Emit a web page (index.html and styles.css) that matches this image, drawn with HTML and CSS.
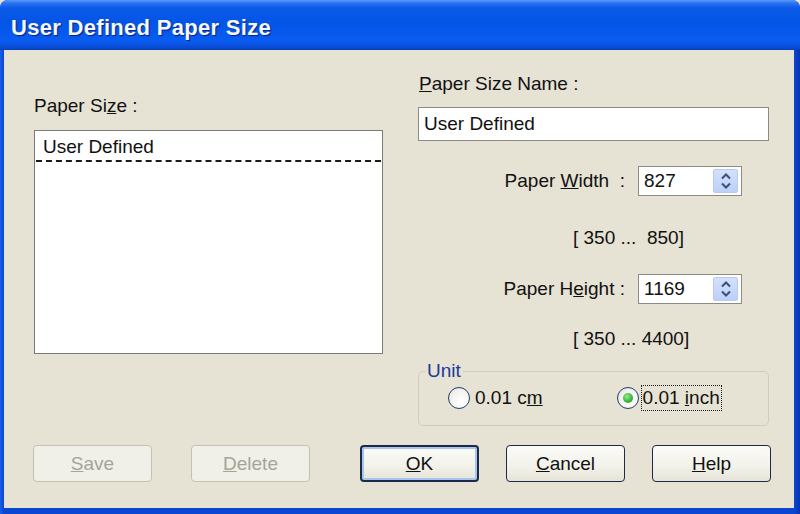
FILE: index.html
```html
<!DOCTYPE html>
<html>
<head>
<meta charset="utf-8">
<link rel="stylesheet" href="styles.css">
</head>
<body>
<div class="window">
  <div class="titlebar"><span class="title">User Defined Paper Size</span></div>
  <div class="client">
    <div class="top">
      <div class="left">
        <div class="label">Paper Si<u>z</u>e :</div>
        <div class="listbox"><div class="item">User Defined</div></div>
      </div>
      <div class="right">
        <div class="label name-label"><u>P</u>aper Size Name :</div>
        <div class="textbox">User Defined</div>
        <div class="field-row row-width">
          <span class="field-label">Paper <u>W</u>idth&nbsp; :</span>
          <div class="spin">
            <span class="spin-value">827</span>
            <span class="spin-btn"><svg width="14" height="20" viewBox="0 0 14 20"><path d="M3 7.5 L7 3.5 L11 7.5" fill="none" stroke="#3c4f7c" stroke-width="2"/><path d="M3 12.5 L7 16.5 L11 12.5" fill="none" stroke="#3c4f7c" stroke-width="2"/></svg></span>
          </div>
        </div>
        <div class="range range-width">[ 350 ...&nbsp;&nbsp;850]</div>
        <div class="field-row row-height">
          <span class="field-label">Paper H<u>e</u>ight :</span>
          <div class="spin">
            <span class="spin-value">1169</span>
            <span class="spin-btn"><svg width="14" height="20" viewBox="0 0 14 20"><path d="M3 7.5 L7 3.5 L11 7.5" fill="none" stroke="#3c4f7c" stroke-width="2"/><path d="M3 12.5 L7 16.5 L11 12.5" fill="none" stroke="#3c4f7c" stroke-width="2"/></svg></span>
          </div>
        </div>
        <div class="range range-height">[ 350 ... 4400]</div>
        <fieldset class="unit">
          <legend>Unit</legend>
          <div class="radios">
            <div class="radio radio-cm"><span class="circle"></span><span class="radio-text">0.01 c<u>m</u></span></div>
            <div class="radio radio-inch"><span class="circle checked"></span><span class="radio-text focus">0.01 <u>i</u>nch</span></div>
          </div>
        </fieldset>
      </div>
    </div>
    <div class="buttons">
      <div class="btn disabled"><u>S</u>ave</div>
      <div class="btn disabled btn-delete"><u>D</u>elete</div>
      <div class="btn default btn-ok"><u>O</u>K</div>
      <div class="btn btn-cancel"><u>C</u>ancel</div>
      <div class="btn btn-help"><u>H</u>elp</div>
    </div>
  </div>
</div>
</body>
</html>
```

FILE: styles.css
```css
html, body {
  margin: 0;
  padding: 0;
  background: #e6e2d4;
  overflow: hidden;
}

.window {
  width: 800px;
  height: 514px;
  display: flex;
  flex-direction: column;
  background: linear-gradient(to right, #1a5ee6 0, #0a46d2 4px, #0a46d2 794px, #0833b0 800px);
  border-radius: 8px 8px 0 0;
  overflow: hidden;
  font-family: "Liberation Sans", Arial, sans-serif;
  font-size: 19px;
  color: #111;
}

.titlebar {
  height: 50px;
  flex: none;
  display: flex;
  align-items: center;
  padding: 6px 0 0 11px;
  box-sizing: border-box;
  background: linear-gradient(to bottom, #5a9cfa 0, #2b74f2 3px, #0b5ae8 8px, #0355e6 45%, #0a5cf2 82%, #0a50dc 92%, #0740c0 100%);
}

.title {
  color: #f4f8ff;
  font-weight: bold;
  font-size: 22px;
  letter-spacing: 0.3px;
  text-shadow: 1px 1px 1px #0a1f80;
}

.client {
  flex: 1;
  margin: 0 6px 6px 4px;
  background: #e6e2d4;
  display: flex;
  flex-direction: column;
}

.top {
  display: flex;
  align-items: flex-start;
  padding-left: 30px;
}

.label {
  height: 22px;
  line-height: 22px;
  white-space: nowrap;
}

.left {
  width: 349px;
  margin-top: 45px;
}

.listbox {
  margin-top: 13px;
  height: 224px;
  box-sizing: border-box;
  border: 1px solid #7a7a78;
  background: #fff;
  padding: 1px;
}

.item {
  height: 28px;
  line-height: 30px;
  padding-left: 7px;
  border-bottom: 2px dashed #1a1a1a;
}

.right {
  width: 351px;
  margin-left: 35px;
  display: flex;
  flex-direction: column;
}

.name-label {
  margin-top: 23px;
  padding-left: 1px;
}

.textbox {
  margin-top: 12px;
  height: 34px;
  line-height: 32px;
  box-sizing: border-box;
  border: 1px solid #8b8b88;
  background: #fff;
  padding-left: 5px;
}

.field-row {
  display: flex;
  align-items: center;
  justify-content: flex-end;
  padding-right: 27px;
}

.row-width { margin-top: 25px; }
.row-height { margin-top: 25px; }

.field-label {
  margin-right: 13px;
  white-space: pre;
}

.spin {
  width: 104px;
  height: 30px;
  box-sizing: border-box;
  border: 1px solid #8b8b88;
  background: #fff;
  display: flex;
  align-items: center;
  justify-content: space-between;
  padding: 2px 3px 2px 5px;
}

.spin-value {
  line-height: 24px;
}

.spin-btn {
  width: 25px;
  height: 24px;
  box-sizing: border-box;
  border-radius: 2px;
  background: linear-gradient(to bottom, #d4e1fc, #bcd0f8);
  border: 1px solid #b7cbf2;
  display: flex;
  align-items: center;
  justify-content: center;
}

.range {
  height: 22px;
  line-height: 22px;
  padding-left: 155px;
  white-space: pre;
}

.range-width { margin-top: 31px; }
.range-height { margin-top: 24px; }

.unit {
  margin: 11px 0 0 0;
  padding: 0 0 12px 0;
  border: 1px solid #cfcbbd;
  border-radius: 5px;
  min-width: 0;
}

.unit legend {
  margin-left: 6px;
  padding: 0 2px;
  line-height: 20px;
  color: #1c3a9c;
}

.radios {
  display: flex;
  align-items: center;
  height: 30px;
  margin-top: 2px;
}

.radio {
  display: flex;
  align-items: center;
}

.radio-cm { margin-left: 29px; }
.radio-inch { margin-left: 74px; }

.circle {
  width: 22px;
  height: 22px;
  box-sizing: border-box;
  border-radius: 50%;
  border: 1.5px solid #1e3f6e;
  background: radial-gradient(circle at 65% 65%, #ffffff 0, #f4f3ee 55%, #dcdbd3 100%);
  display: flex;
  align-items: center;
  justify-content: center;
  margin-right: 5px;
}

.circle.checked::after {
  content: "";
  width: 10px;
  height: 10px;
  border-radius: 50%;
  background: radial-gradient(circle at 40% 35%, #8ef08e 0, #3db53d 55%, #1f8f1f 100%);
}

.radio-text {
  line-height: 24px;
}

.focus {
  outline: 1.5px dotted #1a1a1a;
  outline-offset: 0;
  padding: 0 1px;
  margin-left: -2px;
}

.buttons {
  display: flex;
  margin-top: 19px;
  padding-left: 29px;
}

.btn {
  width: 119px;
  height: 37px;
  box-sizing: border-box;
  border: 1px solid #1b2a48;
  border-radius: 4px;
  background: linear-gradient(to bottom, #fbfbf7 0, #f2f1ea 60%, #e6e4d8 100%);
  display: flex;
  align-items: center;
  justify-content: center;
  flex: none;
}

.btn.disabled {
  border-color: #c3c1b4;
  color: #a6a498;
  background: #f1f0e8;
}

.btn-delete { margin-left: 39px; }
.btn-ok {
  margin-left: 50px;
  border: 2px solid #1b2a48;
  box-shadow: inset 0 0 0 2px #a9c3ef;
}
.btn-cancel { margin-left: 27px; }
.btn-help { margin-left: 27px; }
```
